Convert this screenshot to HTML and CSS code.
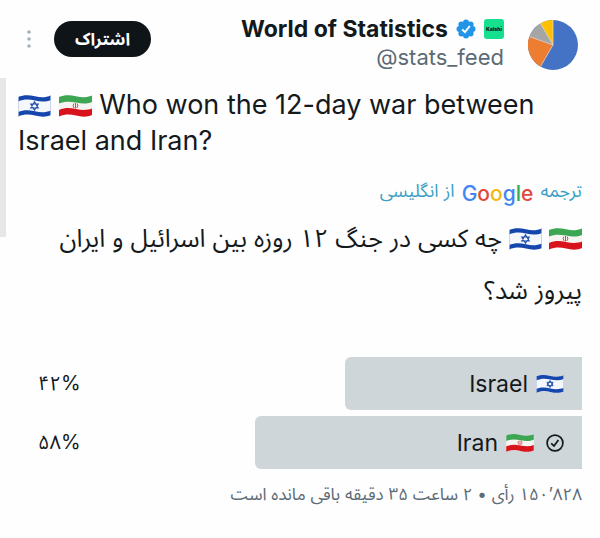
FILE: index.html
```html
<!DOCTYPE html>
<html lang="fa" dir="rtl">
<head>
<meta charset="utf-8">
<meta name="viewport" content="width=device-width, initial-scale=1">
<title>World of Statistics</title>
<link rel="stylesheet" href="styles.css">
</head>
<body>
<svg class="defs" aria-hidden="true">
  <symbol id="israel" viewBox="0 0 33 24">
    <path d="M0 3C6 .5 11 .8 17 2.300S28 3.500 33 1.500V21C28 23.200 23 23 17 21.500S6 20 0 22.500Z" fill="#f4f7fc"/>
    <path d="M0 3C6 .5 11 .8 17 2.300S28 3.500 33 1.500V6C28 8 23 7.800 17 6.500S6 5 0 7.500ZM0 18C6 15.500 11 15.800 17 17.300S28 18.500 33 16.500V21C28 23.200 23 23 17 21.500S6 20 0 22.500Z" fill="#1546ad"/>
    <path d="M.4 3V22.500M32.600 1.500V21" stroke="#b9c6e4" stroke-width=".8"/>
    <path d="M16.500 7.800L20.200 14H12.800ZM16.500 16.200L12.800 10H20.200Z" fill="none" stroke="#2450ae" stroke-width="1.200"/>
  </symbol>
  <symbol id="iran" viewBox="0 0 33 24">
    <path d="M0 3C6 .5 11 .8 17 2.300S28 3.500 33 1.500V21C28 23.200 23 23 17 21.500S6 20 0 22.500Z" fill="#f6f4f2"/>
    <path d="M0 3C6 .5 11 .8 17 2.300S28 3.500 33 1.500V8C28 10 23 9.800 17 8.600S6 7 0 9.500Z" fill="#3da652"/>
    <path d="M0 16C6 13.500 11 13.800 17 15S28 16.500 33 14.500V21C28 23.200 23 23 17 21.500S6 20 0 22.500Z" fill="#d9131c"/>
    <path d="M16.500 9V14.500M14.800 9.600Q13.200 12 15.200 14M18.200 9.600Q19.800 12 17.800 14" fill="none" stroke="#cf4a43" stroke-width="1"/>
  </symbol>
</svg>
<main class="post">
  <header class="head">
    <svg class="avatar" viewBox="0 0 50 50" role="img" aria-label="World of Statistics">
      <circle cx="25" cy="25" r="25" fill="#4472c4"/>
      <path d="M25 25L12.500 46.600A25 25 0 0 1 1.400 16.500Z" fill="#ed7d31"/>
      <path d="M25 25L1.400 16.500A25 25 0 0 1 12.500 3.400Z" fill="#a5a5a5"/>
      <path d="M25 25L12.500 3.400A25 25 0 0 1 25 0Z" fill="#ffc000"/>
      <path d="M25 0V25L12.500 46.600M1.400 16.500L25 25L12.500 3.400" fill="none" stroke="#e8dfdc" stroke-width=".7"/>
    </svg>
    <div class="who" dir="ltr">
      <div class="name">
        <strong>World of Statistics</strong>
        <svg class="verified" viewBox="0 0 20 20" role="img" aria-label="Verified">
          <g fill="#2196e8"><circle cx="10" cy="10" r="7.500"/><circle cx="10" cy="3.500" r="3"/><circle cx="14.600" cy="5.400" r="3"/><circle cx="16.500" cy="10" r="3"/><circle cx="14.600" cy="14.600" r="3"/><circle cx="10" cy="16.500" r="3"/><circle cx="5.400" cy="14.600" r="3"/><circle cx="3.500" cy="10" r="3"/><circle cx="5.400" cy="5.400" r="3"/></g>
          <path d="M6.200 10.400L9 13L13.800 7" fill="none" stroke="#fff" stroke-width="2"/>
        </svg>
        <span class="affiliate">Kalshi</span>
      </div>
      <div class="handle">@stats_feed</div>
    </div>
    <div class="actions">
      <button class="subscribe" type="button">اشتراک</button>
      <button class="more" type="button" aria-label="بیشتر">
        <svg viewBox="0 0 4 18"><g fill="#a3b1b8"><circle cx="2" cy="2" r="1.800"/><circle cx="2" cy="9" r="1.800"/><circle cx="2" cy="16" r="1.800"/></g></svg>
      </button>
    </div>
  </header>

  <p class="text" dir="ltr" lang="en"><svg class="flag"><use href="#israel"/></svg> <svg class="flag"><use href="#iran"/></svg> Who won the 12-day war between Israel and Iran?</p>

  <a class="source" href="#translation">ترجمه <span class="google" dir="ltr"><span class="blue">G</span><span class="red">o</span><span class="yellow">o</span><span class="blue">g</span><span class="green">l</span><span class="red">e</span></span> از انگلیسی</a>

  <p class="translation" id="translation"><svg class="flag"><use href="#iran"/></svg> <svg class="flag"><use href="#israel"/></svg> چه کسی در جنگ ۱۲ روزه بین اسرائیل و ایران پیروز شد؟</p>

  <section class="poll">
    <div class="option">
      <div class="bar" style="width:42%"><svg class="flag"><use href="#israel"/></svg><span>Israel</span></div>
      <span class="share" dir="ltr">۴۲%</span>
    </div>
    <div class="option">
      <div class="bar" style="width:58%">
        <svg class="check" viewBox="0 0 18 18" role="img" aria-label="رأی شما"><circle cx="9" cy="9" r="7.900" fill="none" stroke="#14191c" stroke-width="1.700"/><path d="M5.200 9.400L8 12L12.400 6" fill="none" stroke="#14191c" stroke-width="1.800"/></svg>
        <svg class="flag"><use href="#iran"/></svg><span>Iran</span></div>
      <span class="share" dir="ltr">۵۸%</span>
    </div>
  </section>
  <p class="meta"><bdi dir="ltr">۱۵۰’۸۲۸</bdi> رأی • ۲ ساعت ۳۵ دقیقه باقی مانده است</p>
  <div class="scroll-mark"></div>
</main>
</body>
</html>
```
FILE: styles.css
```css
* { box-sizing: border-box; }
body {
  margin: 0;
  background: #fefefe;
  color: #14191c;
  font-family: Inter, "Noto Sans Arabic", "DejaVu Sans", sans-serif;
}
p { margin: 0; }
button { border: 0; font: inherit; cursor: pointer; }
.defs { position: absolute; width: 0; height: 0; }

.post { position: relative; padding: 16px 18px; }

.head { display: flex; align-items: flex-start; gap: 24px; padding: 0 4px; }
.avatar { width: 50px; height: 50px; margin-top: 4px; flex: none; }
.who { text-align: right; }
.name { display: flex; align-items: center; gap: 8px; line-height: 26px; font-size: 23px; white-space: nowrap; }
.name strong { font-weight: 700; }
.verified { width: 20px; height: 20px; }
.affiliate {
  width: 20px;
  height: 20px;
  border-radius: 3px;
  background: #14e08f;
  font-size: 5px;
  font-weight: 900;
  line-height: 20px;
  text-align: center;
}
.handle { color: #5b6b75; font-size: 22px; line-height: 30px; }
.actions { display: flex; align-items: center; gap: 18px; margin-inline-start: auto; padding-top: 5px; }
.subscribe {
  height: 36px;
  padding: 0 21px;
  border-radius: 18px;
  background: #0f1419;
  color: #fff;
  font-size: 17px;
  font-weight: 700;
  line-height: 36px;
}
.more { padding: 0 5px; background: none; }
.more svg { display: block; width: 4px; height: 18px; }

.flag { width: 33px; height: 24px; vertical-align: -4px; }
.text { margin-top: 15px; font-size: 27px; line-height: 36px; }

.source {
  display: block;
  margin-top: 16px;
  color: #3a9fc4;
  font-size: 18px;
  line-height: 32px;
  text-decoration: none;
}
.google { margin: 0 2px; font-size: 21px; font-weight: 500; vertical-align: -4px; }
.blue { color: #4285f4; }
.red { color: #e2483b; }
.yellow { color: #f2b90f; }
.green { color: #34a853; }

.translation { margin-top: 2px; font-size: 25px; line-height: 52px; }

.poll { display: grid; gap: 6px; margin-top: 41px; }
.option { display: flex; align-items: center; justify-content: space-between; }
.bar {
  display: flex;
  align-items: center;
  gap: 8px;
  height: 53px;
  padding: 0 18px;
  border-radius: 6px 0 0 6px;
  background: #ced6da;
  font-size: 23px;
}
.bar .flag { width: 28px; height: 20px; }
.check { width: 18px; height: 18px; margin-inline-end: 4px; }
.share { padding-left: 20px; font-size: 20px; }

.meta { margin-top: 9px; color: #5b6b75; font-size: 17px; line-height: 32px; }

.scroll-mark { position: absolute; left: 0; top: 78px; width: 6px; height: 159px; background: #e6e8e8; }
```
